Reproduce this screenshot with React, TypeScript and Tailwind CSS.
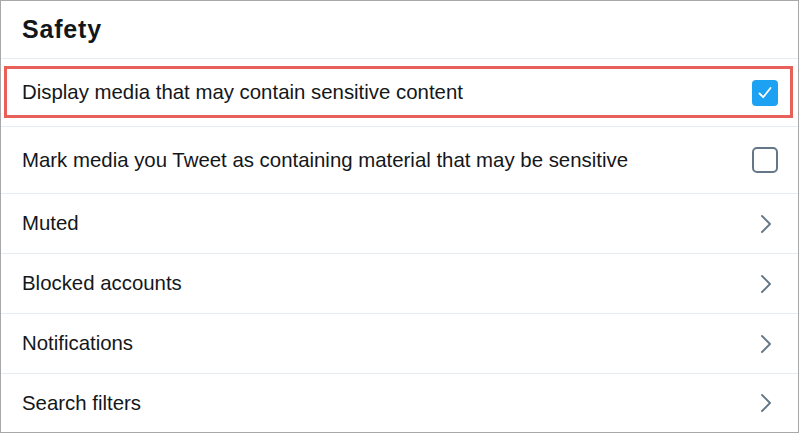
import React from "react";

const Chevron = () => (
  <svg width="12" height="20" viewBox="0 0 12 20" fill="none" className="shrink-0">
    <path d="M2 2 L10 10 L2 18" stroke="#657786" strokeWidth="1.9" strokeLinecap="round" strokeLinejoin="round" />
  </svg>
);

const Checked = () => (
  <div className="w-[26px] h-[26px] rounded-[4px] bg-[#1da1f2] flex items-center justify-center shrink-0">
    <svg width="18" height="18" viewBox="0 0 18 18" fill="none">
      <path d="M3.5 9.5 L7.2 13.2 L14.5 4" stroke="white" strokeWidth="1.8" strokeLinecap="round" strokeLinejoin="round" />
    </svg>
  </div>
);

const Unchecked = () => (
  <div className="w-[26px] h-[26px] rounded-[5px] border-[2.5px] border-[#657786] shrink-0" />
);

export default function App() {
  const font = { fontFamily: '"Liberation Sans", Arial, sans-serif' };
  const navRows = ["Muted", "Blocked accounts", "Notifications", "Search filters"];
  return (
    <div className="w-[799px] h-[433px] bg-white border border-[#a8a8a8] flex flex-col text-[#14171a] overflow-hidden" style={font}>
      <div className="h-[58px] shrink-0 flex items-center pl-[21px] border-b border-[#e6ecf0]">
        <h1 className="text-[25px] font-bold tracking-[0.8px] leading-none">Safety</h1>
      </div>
      <div className="relative h-[68px] shrink-0 flex items-center justify-between pl-[21px] pr-[20px] border-b border-[#e6ecf0]">
        <span className="text-[20.4px]">Display media that may contain sensitive content</span>
        <Checked />
        <div className="absolute left-[3px] right-[5px] top-[7px] bottom-[8px] border-[3px] border-[#e8605a] pointer-events-none" />
      </div>
      <div className="h-[67px] shrink-0 flex items-center justify-between pl-[21px] pr-[20px] border-b border-[#e6ecf0]">
        <span className="text-[20.4px]">Mark media you Tweet as containing material that may be sensitive</span>
        <Unchecked />
      </div>
      {navRows.map((label, i) => (
        <div
          key={label}
          className={
            i < navRows.length - 1
              ? "h-[60px] shrink-0 flex items-center justify-between pl-[21px] pr-[26px] border-b border-[#e6ecf0]"
              : "flex-1 flex items-center justify-between pl-[21px] pr-[26px]"
          }
        >
          <span className="text-[20.4px]">{label}</span>
          <Chevron />
        </div>
      ))}
    </div>
  );
}
